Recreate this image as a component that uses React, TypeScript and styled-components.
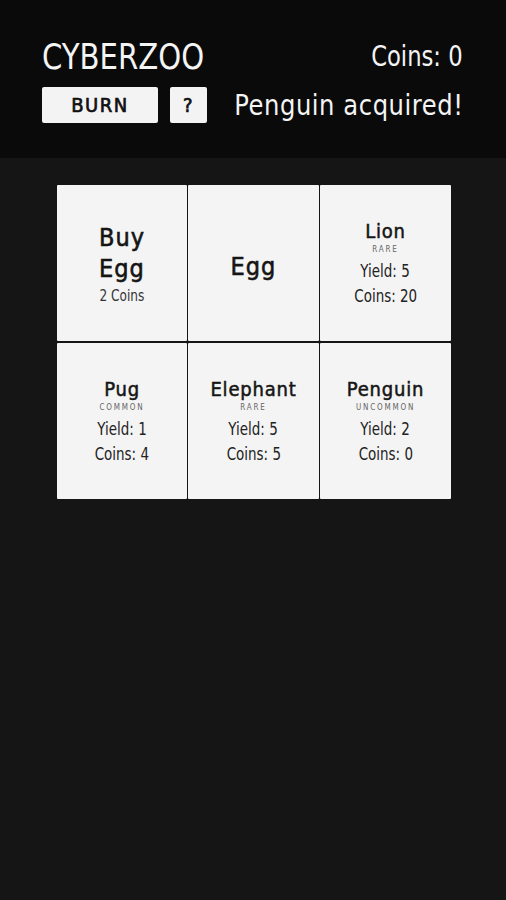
import React from 'react';
import styled, { createGlobalStyle } from 'styled-components';

const GlobalStyle = createGlobalStyle`
    html, body {
        margin: 0;
        padding: 0;
        background: #151515;
    }
    body {
        font-family: 'DejaVu Sans Condensed', 'DejaVu Sans', sans-serif;
    }
`;

type Animal = {
    name: string;
    rarity: string;
    yieldAmount: number;
    coins: number;
};

const animals: Animal[] = [
    { name: 'Lion', rarity: 'RARE', yieldAmount: 5, coins: 20 },
    { name: 'Pug', rarity: 'COMMON', yieldAmount: 1, coins: 4 },
    { name: 'Elephant', rarity: 'RARE', yieldAmount: 5, coins: 5 },
    { name: 'Penguin', rarity: 'UNCOMMON', yieldAmount: 2, coins: 0 },
];

export default function App() {
    const [lion, ...rest] = animals;
    return (
        <Page>
            <GlobalStyle />
            <Header>
                <TopRow>
                    <Title>CYBERZOO</Title>
                    <Coins>Coins: 0</Coins>
                </TopRow>
                <BottomRow>
                    <Buttons>
                        <Button $wide>BURN</Button>
                        <Button>?</Button>
                    </Buttons>
                    <Message>Penguin acquired!</Message>
                </BottomRow>
            </Header>

            <Grid>
                <Cell>
                    <BigLabel>
                        Buy
                        <br />
                        Egg
                    </BigLabel>
                    <Price>2 Coins</Price>
                </Cell>
                <Cell>
                    <BigLabel $offset={7}>Egg</BigLabel>
                </Cell>
                <AnimalCell animal={lion} />
                {rest.map((a) => (
                    <AnimalCell key={a.name} animal={a} />
                ))}
            </Grid>
        </Page>
    );
}

function AnimalCell({ animal }: { animal: Animal }) {
    return (
        <StatCell>
            <Name>{animal.name}</Name>
            <Rarity>{animal.rarity}</Rarity>
            <Stat $first>Yield: {animal.yieldAmount}</Stat>
            <Stat>Coins: {animal.coins}</Stat>
        </StatCell>
    );
}

const Page = styled.div`
    min-height: 900px;
    background: #151515;
`;

const Header = styled.header`
    background: #0a0a0a;
    height: 158px;
    box-sizing: border-box;
    padding: 36px 43px 0 42px;
    color: #f4f4f4;
`;

const TopRow = styled.div`
    display: flex;
    justify-content: space-between;
    align-items: center;
    height: 40px;
`;

const Title = styled.h1`
    margin: 0;
    font-size: 36px;
    font-weight: normal;
    font-family: 'DejaVu Sans Condensed', sans-serif;
    transform: scaleX(0.9);
    transform-origin: left center;
`;

const Coins = styled.div`
    font-size: 28px;
    transform: scaleX(0.9);
    transform-origin: right center;
`;

const BottomRow = styled.div`
    display: flex;
    justify-content: space-between;
    align-items: center;
    margin-top: 11px;
`;

const Buttons = styled.div`
    display: flex;
    gap: 12px;
`;

const Button = styled.button<{ $wide?: boolean }>`
    width: ${(p) => (p.$wide ? '116px' : '37px')};
    height: 36px;
    border: none;
    border-radius: 2px;
    background: #f3f3f3;
    color: #111;
    font-family: 'DejaVu Sans Condensed', sans-serif;
    font-weight: normal;
    -webkit-text-stroke: 0.7px #111;
    font-size: 20px;
    letter-spacing: 1.5px;
    padding: 0;
`;

const Message = styled.div`
    font-size: 29px;
    letter-spacing: 0.6px;
    transform: scaleX(0.93);
    transform-origin: right center;
    margin-right: -1px;
`;

const Grid = styled.div`
    display: grid;
    grid-template-columns: 130px 131px 131px;
    grid-template-rows: 156px 156px;
    gap: 2px 1px;
    width: 393px;
    margin: 27px 0 0 57px;
    background: #151515;
`;

const Cell = styled.div`
    background: #f4f4f4;
    color: #1a1a1a;
    display: flex;
    flex-direction: column;
    align-items: center;
    justify-content: center;
    text-align: center;
    border-radius: 1px;
`;

const StatCell = styled(Cell)`
    justify-content: flex-start;
    padding-top: 35px;
`;

const BigLabel = styled.div<{ $offset?: number }>`
    font-size: 25px;
    line-height: 31px;
    letter-spacing: 1px;
    color: #151515;
    -webkit-text-stroke: 0.6px #151515;
    margin-top: ${(p) => p.$offset ?? 0}px;
`;

const Price = styled.div`
    font-size: 15px;
    color: #333;
    margin-top: 3px;
    transform: scaleX(0.9);
`;

const Name = styled.div`
    font-size: 20px;
    letter-spacing: 0.8px;
    line-height: 22px;
    color: #151515;
    -webkit-text-stroke: 0.5px #151515;
`;

const Rarity = styled.div`
    font-size: 8px;
    letter-spacing: 1.8px;
    color: #666;
    line-height: 10px;
    margin-top: 3px;
`;

const Stat = styled.div<{ $first?: boolean }>`
    font-size: 17px;
    color: #222;
    line-height: 25px;
    margin-top: ${(p) => (p.$first ? '4px' : '0')};
    transform: scaleX(0.88);
`;
